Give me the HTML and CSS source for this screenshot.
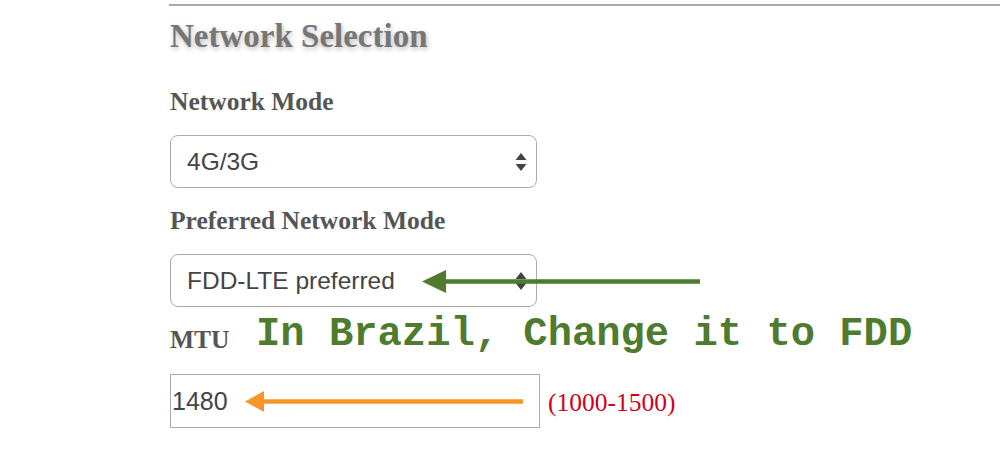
FILE: index.html
```html
<!DOCTYPE html>
<html>
<head>
<meta charset="utf-8">
<link rel="stylesheet" href="styles.css">
</head>
<body>
<div class="panel">
  <h2 class="title">Network Selection</h2>

  <div class="label label-first">Network Mode</div>
  <div class="select">
    <span class="select-value">4G/3G</span>
    <svg class="select-arrows" width="12" height="20" viewBox="0 0 12 20"><polygon points="6,1 11.5,8 0.5,8" fill="#444"/><polygon points="6,19 11.5,12 0.5,12" fill="#444"/></svg>
  </div>

  <div class="label">Preferred Network Mode</div>
  <div class="select">
    <span class="select-value">FDD-LTE preferred</span>
    <svg class="select-arrows" width="12" height="20" viewBox="0 0 12 20"><polygon points="6,1 11.5,8 0.5,8" fill="#444"/><polygon points="6,19 11.5,12 0.5,12" fill="#444"/></svg>
  </div>

  <div class="label">MTU</div>
  <div class="mtu-row">
    <div class="input">1480</div>
    <span class="range">(1000-1500)</span>
  </div>
</div>

<div class="note">In Brazil, Change it to FDD</div>

<svg class="arrow" width="1000" height="449" viewBox="0 0 1000 449">
  <line x1="440" y1="281.5" x2="700" y2="281.5" stroke="#4e7b2d" stroke-width="4.5"/>
  <polygon points="422,281.5 446,270 446,293" fill="#4e7b2d"/>
</svg>
<svg class="arrow" width="1000" height="449" viewBox="0 0 1000 449">
  <line x1="258" y1="401.5" x2="523" y2="401.5" stroke="#f6962a" stroke-width="4.5"/>
  <polygon points="245,401.5 264,391 264,412" fill="#f6962a"/>
</svg>
</body>
</html>
```

FILE: styles.css
```css
html, body {
  margin: 0;
  padding: 0;
  background: #ffffff;
}

body {
  position: relative;
  width: 1000px;
  height: 449px;
  overflow: hidden;
}

.panel {
  margin: 4px 0 0 169px;
  border-top: 2px solid #ababab;
  padding-left: 1px;
  font-family: "Liberation Serif", "Times New Roman", serif;
}

.title {
  margin: 14px 0 0;
  font-size: 33px;
  line-height: 33px;
  font-weight: bold;
  color: #767676;
  text-shadow: 1px 2px 5px #b8b8b8;
}

.label {
  margin-top: 20px;
  font-size: 25.5px;
  line-height: 25px;
  font-weight: bold;
  color: #555555;
}

.label-first {
  margin-top: 36px;
}

.select {
  box-sizing: border-box;
  width: 367px;
  height: 53px;
  margin-top: 21px;
  border: 1.5px solid #ababab;
  border-radius: 8px;
  display: flex;
  align-items: center;
  justify-content: space-between;
  padding: 0 9px 0 16px;
  font-family: "Liberation Sans", Arial, sans-serif;
  font-size: 24.5px;
  color: #444444;
}

.select-arrows {
  display: block;
}

.mtu-row {
  margin-top: 22px;
  display: flex;
  align-items: center;
}

.input {
  box-sizing: border-box;
  width: 370px;
  height: 54px;
  border: 1.5px solid #ababab;
  display: flex;
  align-items: center;
  padding-left: 1px;
  font-family: "Liberation Sans", Arial, sans-serif;
  font-size: 25px;
  color: #444444;
}

.range {
  margin-left: 8px;
  margin-top: 4px;
  font-family: "Liberation Serif", "Times New Roman", serif;
  font-size: 25.5px;
  color: #d0021b;
}

.note {
  position: absolute;
  left: 256px;
  top: 314px;
  font-family: "Liberation Mono", "Courier New", monospace;
  font-weight: bold;
  font-size: 40.5px;
  line-height: 40px;
  color: #4e7b2d;
  white-space: nowrap;
}

.arrow {
  position: absolute;
  left: 0;
  top: 0;
}
```
